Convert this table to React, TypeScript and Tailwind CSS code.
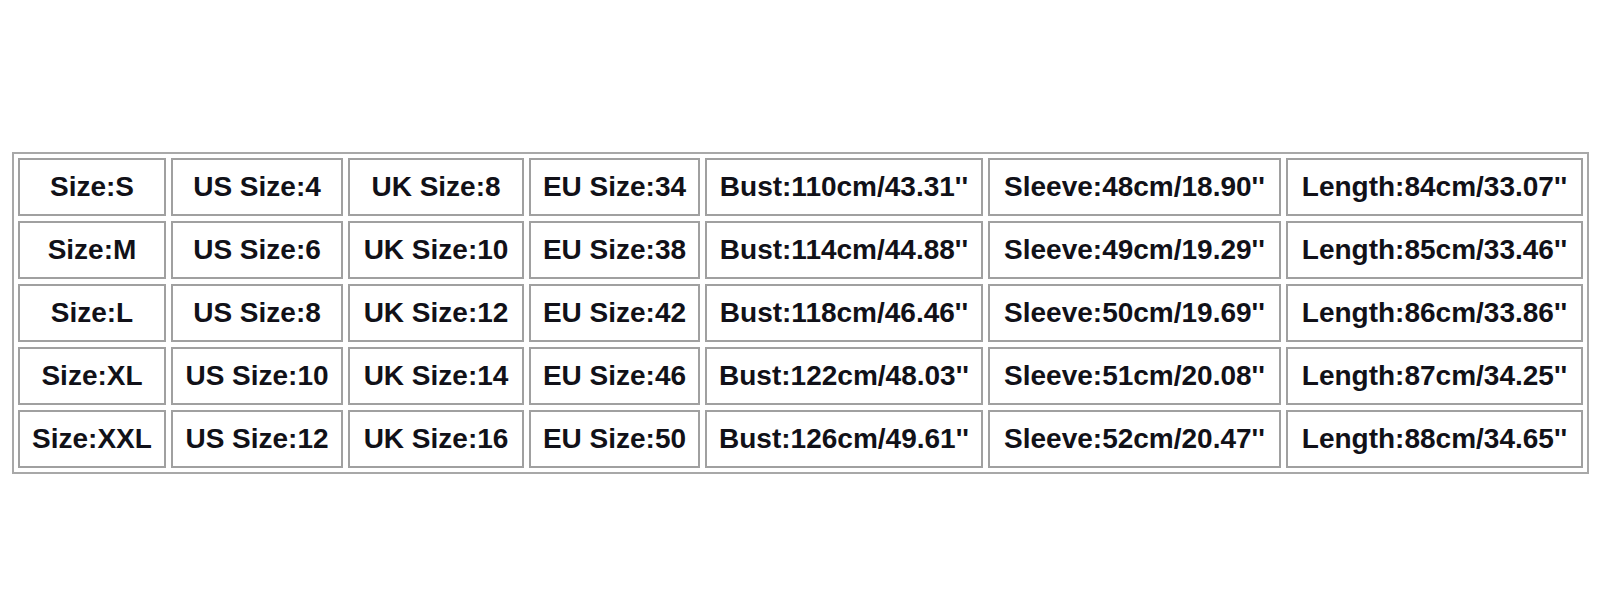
import React from "react";

const rows = [
  ["Size:S", "US Size:4", "UK Size:8", "EU Size:34", "Bust:110cm/43.31''", "Sleeve:48cm/18.90''", "Length:84cm/33.07''"],
  ["Size:M", "US Size:6", "UK Size:10", "EU Size:38", "Bust:114cm/44.88''", "Sleeve:49cm/19.29''", "Length:85cm/33.46''"],
  ["Size:L", "US Size:8", "UK Size:12", "EU Size:42", "Bust:118cm/46.46''", "Sleeve:50cm/19.69''", "Length:86cm/33.86''"],
  ["Size:XL", "US Size:10", "UK Size:14", "EU Size:46", "Bust:122cm/48.03''", "Sleeve:51cm/20.08''", "Length:87cm/34.25''"],
  ["Size:XXL", "US Size:12", "UK Size:16", "EU Size:50", "Bust:126cm/49.61''", "Sleeve:52cm/20.47''", "Length:88cm/34.65''"],
];

export default function App() {
  return (
    <div className="w-[1600px] h-[600px] bg-white pt-[152px] pl-[12px]">
      <div className="w-fit border-2 border-[#a8a8a8] p-[4px]">
        <div className="grid grid-cols-[148px_172px_176px_171px_278px_293px_297px] auto-rows-[58px] gap-[5px]">
          {rows.map((row, i) =>
            row.map((cell, j) => (
              <div
                key={i + "-" + j}
                className="flex items-center justify-center border-2 border-[#a0a0a0] text-[28px] font-bold text-[#111118] whitespace-nowrap font-['Liberation_Sans',Arial,sans-serif]"
              >
                {cell}
              </div>
            ))
          )}
        </div>
      </div>
    </div>
  );
}
